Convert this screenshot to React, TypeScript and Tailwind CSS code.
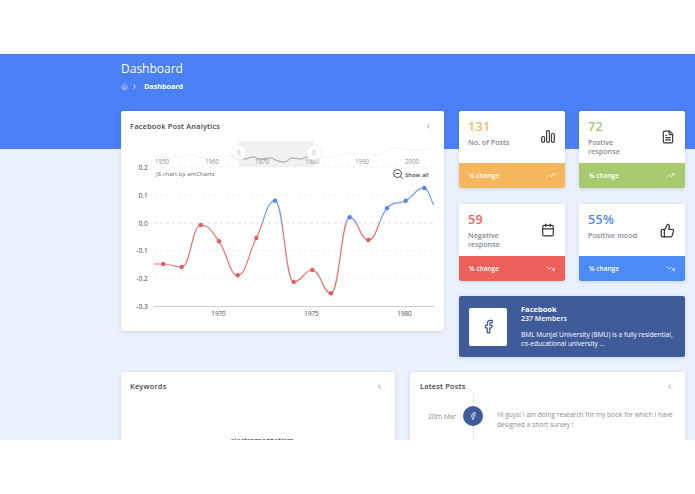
import React from "react";
import { Calendar, ChevronLeft, ChevronRight, Facebook, FileText, Home, ThumbsUp, TrendingDown, TrendingUp, ZoomOut } from "lucide-react";

const font = "font-['Open_Sans','Liberation_Sans',sans-serif]";

const points: [number, number][] = [
	[154, 264], [163.3, 264], [181.7, 267], [200.7, 225], [219, 241.3], [237.7, 275.3], [256.3, 238], [275, 200.7],
	[293.7, 282], [312.3, 270], [331, 293.3], [349.7, 217.3], [368.3, 240], [387, 208.3], [405.7, 200.7], [424.3, 188], [433.7, 205],
];

const navigator: [number, number][] = [
	[154, 156], [175, 158], [190, 155], [205, 158], [225, 156], [245, 159], [253, 157], [260, 159], [270, 158], [278, 161], [285, 162], [292, 158],
	[300, 159], [307, 157], [314, 156], [330, 157], [350, 153], [375, 155], [397, 148], [415, 150], [434, 148],
];

// monotone tangents so peaks stay flat on the data points, like the amCharts smoothing
function smooth(pts: [number, number][]) {
	const slope = (a: [number, number], b: [number, number]) => (b[1] - a[1]) / (b[0] - a[0]);
	const tangents = pts.map((p, i) => {
		if (i === 0) return slope(p, pts[1]) / 2;
		if (i === pts.length - 1) return slope(pts[i - 1], p);
		const a = slope(pts[i - 1], p);
		const b = slope(p, pts[i + 1]);
		return a * b <= 0 ? 0 : (a + b) / 2;
	});
	let d = `M${pts[0][0]} ${pts[0][1]}`;
	for (let i = 0; i < pts.length - 1; i++) {
		const dx = (pts[i + 1][0] - pts[i][0]) * 0.45;
		d += ` C${pts[i][0] + dx} ${pts[i][1] + tangents[i] * dx} ${pts[i + 1][0] - dx} ${pts[i + 1][1] - tangents[i + 1] * dx} ${pts[i + 1][0]} ${pts[i + 1][1]}`;
	}
	return d;
}

function Chart() {
	const line = smooth(points);
	const nav = smooth(navigator);
	return (
		<svg viewBox="121 137 323 194" className="w-[323px] h-[194px] block">
			<defs>
				<clipPath id="above"><rect x="121" y="137" width="323" height="86" /></clipPath>
				<clipPath id="below"><rect x="121" y="223" width="323" height="108" /></clipPath>
				<clipPath id="selected"><rect x="239" y="141" width="75" height="26" /></clipPath>
			</defs>
			<rect x="239" y="141" width="75" height="26" fill="#f1f1f1" />
			<path d={nav} fill="none" stroke="#f2f2f2" strokeWidth="1" />
			<path d={nav} fill="none" stroke="#8a8a8a" strokeWidth="0.8" clipPath="url(#selected)" />
			{[["1950", 162], ["1960", 212], ["1970", 262], ["1980", 312], ["1990", 362], ["2000", 412]].map(([t, x]) => (
				<text key={t} x={x} y="164" textAnchor="middle" fontSize="6.2" fill="#8f8f8f">{t}</text>
			))}
			{[[239, 152.5], [314, 152.5]].map(([x, y]) => (
				<g key={x}>
					<circle cx={x} cy={y} r="7.5" fill="#fff" stroke="#ececec" />
					<rect x={x - 1.2} y={y - 2.5} width="2.4" height="5" fill="#e8e8e8" stroke="#d4d4d4" strokeWidth="0.5" />
				</g>
			))}
			{[[0.2, 167], [0.1, 195], [0.0, 223], [-0.1, 250.5], [-0.2, 278.3]].map(([v, y]) => (
				<line key={v} x1="154" x2="434" y1={y} y2={y} stroke={v === 0 ? "#dddddd" : "#efefef"} strokeWidth="1" strokeDasharray="3 3" />
			))}
			<line x1="154" x2="434" y1="306.5" y2="306.5" stroke="#cccccc" strokeWidth="1" />
			{[["0.2", 167], ["0.1", 195], ["0.0", 223], ["-0.1", 250.5], ["-0.2", 278.3], ["-0.3", 306.3]].map(([t, y]) => (
				<text key={t} x="148" y={Number(y) + 2.5} textAnchor="end" fontSize="6.8" fill="#4a4a4a">{t}</text>
			))}
			{[[218.5, "1970"], [311.5, "1975"], [404.5, "1980"]].map(([x, t]) => (
				<g key={t}>
					<line x1={x} x2={x} y1="306" y2="310" stroke="#e2e2e2" />
					<text x={x} y="315.5" textAnchor="middle" fontSize="6.3" fill="#4a4a4a">{t}</text>
				</g>
			))}
			<text x="156" y="175.5" fontSize="6.1" fill="#666666">JS chart by amCharts</text>
			<text x="405" y="177" fontSize="5.9" fontWeight="600" fill="#444444">Show all</text>
			<ZoomOut x="392" y="168" width="12" height="12" stroke="#333333" strokeWidth="1.7" />
			<path d={line} fill="none" stroke="#e77474" strokeWidth="1.2" clipPath="url(#below)" />
			<path d={line} fill="none" stroke="#6c9aee" strokeWidth="1.2" clipPath="url(#above)" />
			{points.slice(1, -1).map(([x, y]) => (
				<circle key={x} cx={x} cy={y} r="2.2" fill={y > 223 ? "#e25d5d" : "#5088ec"} />
			))}
		</svg>
	);
}

function CardHeader({ title }: { title: string }) {
	return (
		<div className="flex items-center justify-between h-[13px]">
			<h3 className="text-[7.4px] font-semibold tracking-[0.2px] text-[#3f4750]">{title}</h3>
			<ChevronLeft className="w-[7px] h-[7px] text-[#555555]" />
		</div>
	);
}

type StatProps = {
	value: string;
	label: string[];
	valueColor: string;
	footer: string;
	icon: React.ReactNode;
	trend: React.ReactNode;
};

function Stat({ value, label, valueColor, footer, icon, trend }: StatProps) {
	return (
		<div className="w-[106px] h-[77px] flex flex-col bg-white rounded-[2px] overflow-hidden shadow-[0_1px_4px_rgba(80,100,140,0.2)]">
			<div className="flex-1 flex justify-between pl-[9px] pr-[10px] pt-[8px]">
				<div>
					<div className={`text-[12.5px] leading-[16px] font-semibold tracking-[0.4px] ${valueColor}`}>{value}</div>
					<div className="mt-[2.5px] text-[7.2px] leading-[9px] font-semibold text-[#868c95]">
						{label.map((l) => <div key={l}>{l}</div>)}
					</div>
				</div>
				<div className="pt-[11px]">{icon}</div>
			</div>
			<div className={`h-[25px] flex items-center justify-between px-[10px] text-white text-[6.5px] font-semibold ${footer}`}>
				<span>% change</span>
				{trend}
			</div>
		</div>
	);
}

const up = <TrendingUp className="w-[9px] h-[9px] text-white/80" />;
const down = <TrendingDown className="w-[9px] h-[9px] text-white/90" />;

function BarsIcon() {
	return (
		<svg viewBox="0 0 14 13" className="w-[14px] h-[13px]" fill="none" stroke="#3a3f45" strokeWidth="1.2">
			<rect x="0.7" y="6.5" width="2.8" height="5.8" rx="1" />
			<rect x="5.6" y="0.7" width="2.8" height="11.6" rx="1" />
			<rect x="10.5" y="3.5" width="2.8" height="8.8" rx="1" />
		</svg>
	);
}

export default function App() {
	return (
		<div className={`w-[695px] h-[494px] bg-white pt-[54px] pb-[54px] ${font}`}>
			<div className="h-[386px] overflow-hidden bg-[#ebf1fd]">
				<div className="h-[95px] bg-[#4a7ff5] pl-[121px] pt-[7px] text-white">
					<h1 className="text-[12px] leading-[16px]">Dashboard</h1>
					<div className="mt-[4px] flex items-center">
						<Home className="w-[7px] h-[7px] text-white/80" />
						<ChevronRight className="ml-[3px] w-[7px] h-[7px]" strokeWidth={3} />
						<span className="ml-[6px] text-[7.2px] leading-[10px] font-bold">Dashboard</span>
					</div>
				</div>
				<div className="-mt-[38px] pl-[121px] flex gap-[15px]">
					<div className="w-[323px] h-[220px] bg-white rounded-[2px] shadow-[0_1px_4px_rgba(80,100,140,0.2)]">
						<div className="pl-[9px] pr-[12px] pt-[9px] h-[26px]">
							<CardHeader title="Facebook Post Analytics" />
						</div>
						<Chart />
					</div>
					<div className="w-[226px] flex flex-col gap-[16px]">
						<div className="flex justify-between">
							<Stat value="131" label={["No. of Posts"]} valueColor="text-[#f5b75f]" footer="bg-[#f6b65e]" icon={<BarsIcon />} trend={up} />
							<Stat value="72" label={["Postive", "response"]} valueColor="text-[#a6c96f]" footer="bg-[#a7ca6f]" icon={<FileText className="w-[14px] h-[14px] text-[#33383d]" />} trend={up} />
						</div>
						<div className="flex justify-between">
							<Stat value="59" label={["Negative", "response"]} valueColor="text-[#ee5f5b]" footer="bg-[#ee5f5b]" icon={<Calendar className="w-[14px] h-[14px] text-[#33383d]" />} trend={down} />
							<Stat value="55%" label={["Positive mood"]} valueColor="text-[#4f8af2]" footer="bg-[#4c8af5]" icon={<ThumbsUp className="w-[15px] h-[15px] text-[#33383d]" />} trend={down} />
						</div>
						<div className="-mt-[1px] h-[61px] flex items-center bg-[#3f5b99] rounded-[2px] pl-[10px] pr-[10px] text-white shadow-[0_1px_4px_rgba(80,100,140,0.2)]">
							<div className="w-[38px] h-[38px] shrink-0 flex items-center justify-center bg-white rounded-[2px]">
								<Facebook className="w-[15px] h-[15px] text-[#3f5b99]" />
							</div>
							<div className="ml-[14px] text-[6.6px] leading-[9px]">
								<div className="text-[7.5px] font-bold">Facebook</div>
								<div className="text-[7px] font-semibold">237 Members</div>
								<div className="mt-[7px] leading-[9.5px]">BML Munjal University (BMU) is a fully residential, co-educational university ...</div>
							</div>
						</div>
					</div>
				</div>
				<div className="mt-[15px] pl-[121px] flex gap-[15px]">
					<div className="w-[274px] h-[100px] bg-white rounded-[2px] pl-[9px] pr-[12px] pt-[8px] shadow-[0_1px_4px_rgba(80,100,140,0.2)]">
						<CardHeader title="Keywords" />
						<div className="mt-[42px] pl-[11px] text-center text-[7.5px] leading-[10px] text-[#333333]">electromagnetism</div>
					</div>
					<div className="w-[275px] h-[100px] bg-white rounded-[2px] pl-[10px] pr-[12px] pt-[8px] shadow-[0_1px_4px_rgba(80,100,140,0.2)]">
						<CardHeader title="Latest Posts" />
						<div className="relative mt-[13px] flex items-start text-[6.6px] text-[#868c95]">
							<div className="absolute left-[53px] -top-[12px] w-px h-[60px] bg-[#e6e9ef]" />
							<span className="w-[35px] mt-[6px] ml-[8px] shrink-0 leading-[10px]">20th Mar</span>
							<div className="relative w-[20px] h-[20px] mr-[14px] shrink-0 flex items-center justify-center rounded-full bg-[#3f5b99]">
								<Facebook className="w-[8px] h-[8px] text-white" />
							</div>
							<p className="leading-[10px] -mr-[6px] mt-[4px]">Hi guys! I am doing research for my book for which I have designed a short survey !</p>
						</div>
					</div>
				</div>
			</div>
		</div>
	);
}
